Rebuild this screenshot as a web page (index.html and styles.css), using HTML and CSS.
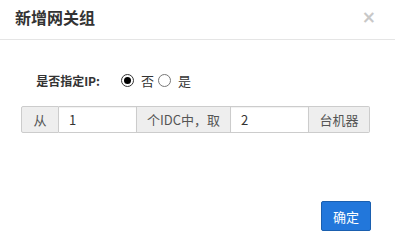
FILE: index.html
```html
<!DOCTYPE html>
<html lang="zh-CN">
<head>
<meta charset="utf-8">
<title>新增网关组</title>
<link rel="stylesheet" href="styles.css">
</head>
<body>
<div class="modal">
  <div class="modal-header">
    <h4 class="modal-title">新增网关组</h4>
    <span class="close">×</span>
  </div>
  <div class="modal-body">
    <div class="form-row">
      <label class="form-label">是否指定IP:</label>
      <div class="radios">
        <span class="radio checked"></span><span class="radio-text">否</span>
        <span class="radio"></span><span class="radio-text">是</span>
      </div>
    </div>
    <div class="input-group">
      <span class="addon addon-from">从</span>
      <span class="field">1</span>
      <span class="addon addon-mid">个IDC中，取</span>
      <span class="field">2</span>
      <span class="addon addon-end">台机器</span>
    </div>
  </div>
  <div class="modal-footer">
    <button class="btn-primary">确定</button>
  </div>
</div>
</body>
</html>
```

FILE: styles.css
```css
html, body {
  margin: 0;
  padding: 0;
  background: #fff;
}
body {
  font-family: "Noto Sans CJK SC", "Noto Sans", sans-serif;
  color: #333;
  font-size: 12px;
}
.modal {
  width: 395px;
  height: 247px;
}
.modal-header {
  height: 39px;
  border-bottom: 1px solid #e5e5e5;
  display: flex;
  align-items: center;
  justify-content: space-between;
  padding: 0 19px 0 15px;
}
.modal-title {
  margin: 0;
  font-size: 16px;
  font-weight: bold;
  color: #333;
  line-height: 20px;
  margin-top: -5px;
}
.close {
  font-family: "DejaVu Sans", sans-serif;
  font-size: 17px;
  font-weight: bold;
  color: #c8c8c8;
  line-height: 20px;
  margin-top: -5px;
}
.modal-body {
  padding: 30px 25px 0 21px;
}
.form-row {
  display: flex;
  align-items: center;
  height: 20px;
}
.form-label {
  width: 79px;
  text-align: right;
  font-weight: bold;
  font-size: 12px;
  color: #333;
}
.radios {
  display: flex;
  align-items: center;
  margin-left: 21px;
}
.radio {
  box-sizing: border-box;
  width: 13px;
  height: 13px;
  border: 1px solid #777;
  border-radius: 50%;
  display: flex;
  align-items: center;
  justify-content: center;
}
.radio.checked {
  border-color: #333;
}
.radio.checked::after {
  content: "";
  width: 7px;
  height: 7px;
  border-radius: 50%;
  background: #000;
}
.radio-text {
  font-size: 13px;
  margin: 0 4px 0 7px;
  color: #333;
}
.input-group {
  display: flex;
  margin-top: 16px;
  height: 27px;
}
.addon, .field {
  box-sizing: border-box;
  height: 27px;
  display: flex;
  align-items: center;
  font-size: 13px;
  border: 1px solid #ccc;
}
.addon {
  background: #eee;
  color: #555;
  justify-content: center;
}
.addon + .field, .field + .addon {
  border-left: none;
}
.addon-from { width: 38px; }
.addon-mid { width: 94px; }
.addon-end { width: 61px; border-radius: 0 2px 2px 0; }
.addon-from { border-radius: 2px 0 0 2px; }
.field {
  flex: 1;
  background: #fff;
  color: #333;
  padding-left: 10px;
  box-shadow: inset 0 1px 1px rgba(0,0,0,0.06);
}
.modal-footer {
  display: flex;
  justify-content: flex-end;
  padding: 68px 24px 0 0;
}
.btn-primary {
  box-sizing: border-box;
  width: 50px;
  height: 30px;
  background: #2277db;
  border: 1px solid #1a5faf;
  border-radius: 2px;
  color: #fff;
  font-family: "Noto Sans CJK SC", sans-serif;
  font-size: 13px;
  padding: 0;
}
```
